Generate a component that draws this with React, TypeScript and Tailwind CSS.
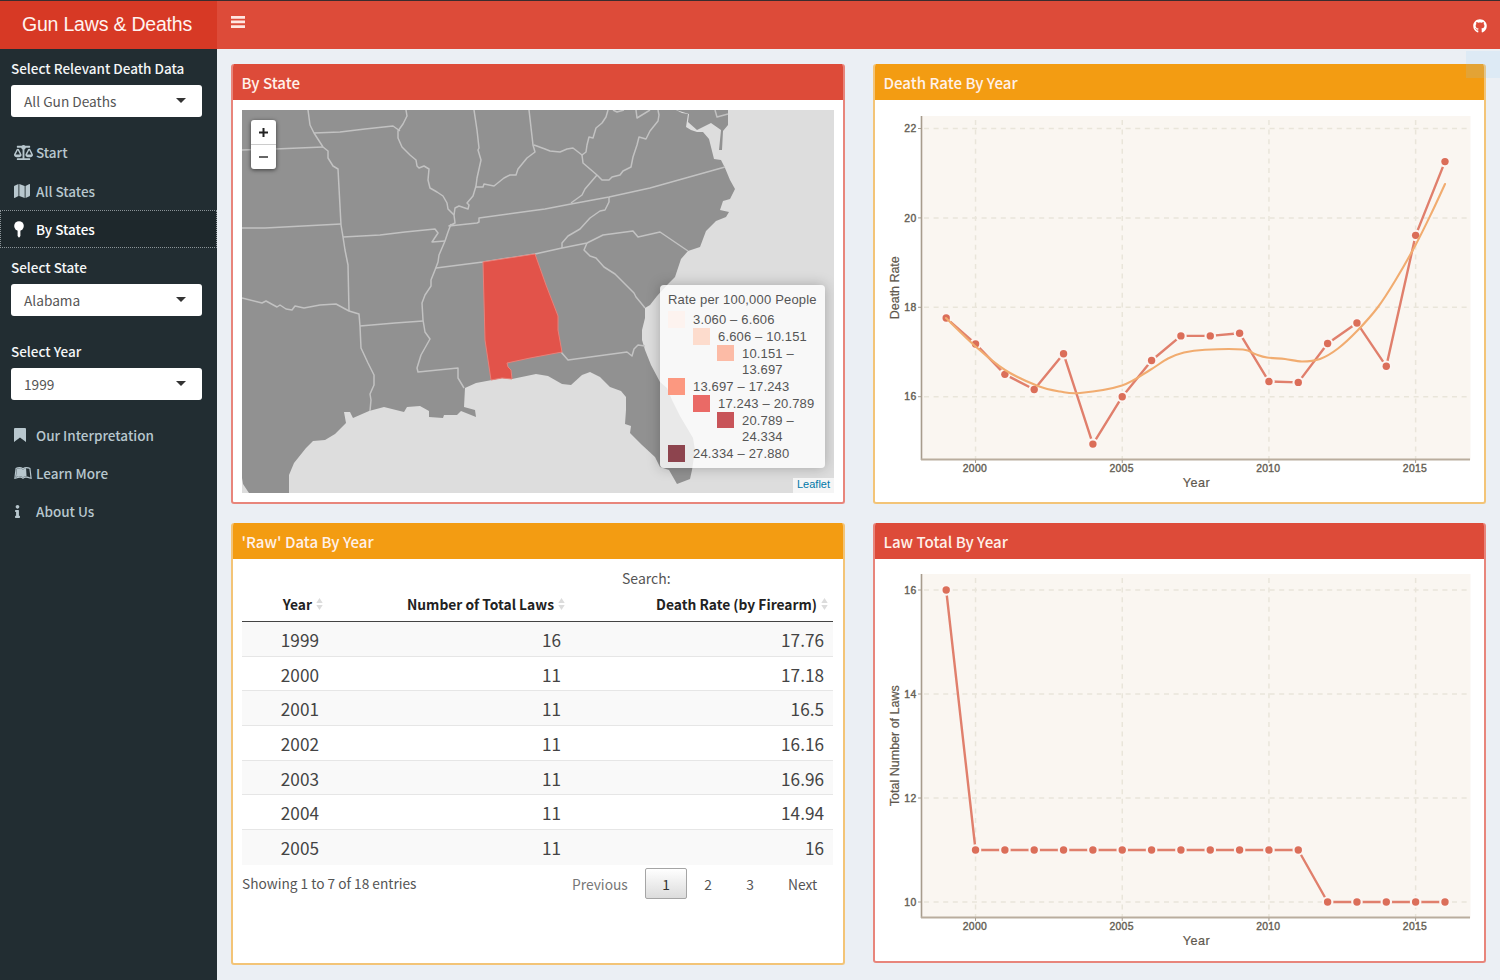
import React from "react";
import { FaBalanceScale, FaMap, FaLeanpub, FaInfo, FaGithub } from "react-icons/fa";

const SANS = "font-['Noto_Sans_CJK_SC',sans-serif]";

function Select({ label, value }: { label: string; value: string }) {
  return (
    <div className="pr-[15px] pl-[11px]">
      <div className="h-[20px] text-[13.5px] leading-[18px] font-medium text-[#f4f6f7] whitespace-nowrap">{label}</div>
      <div className="mt-[6px] flex h-[32px] items-center justify-between rounded-[3px] bg-white pr-[16px] pl-[13px]">
        <span className="text-[13.7px] leading-[20px] text-[#555]">{value}</span>
        <svg width="10" height="5" viewBox="0 0 10 5" className="mb-[2px]">
          <path d="M0 0h10L5 5z" fill="#333" />
        </svg>
      </div>
    </div>
  );
}

function MenuItem({ icon, label, active }: { icon: React.ReactNode; label: string; active?: boolean }) {
  return (
    <div
      className={
        active
          ? "flex h-[38px] items-center border border-dotted border-[#8b9498] bg-[#1e282c] pl-[13px] text-white"
          : "flex h-[38px] items-center pl-[14px] text-[#b8c7ce]"
      }
    >
      <span className="flex w-[22px] shrink-0 items-center">{icon}</span>
      <span className="pb-[1px] text-[13.5px] leading-[20px] font-medium whitespace-nowrap">{label}</span>
    </div>
  );
}

function PinIcon() {
  return (
    <svg width="10" height="17" viewBox="0 0 10 17" fill="currentColor">
      <circle cx="5" cy="5" r="4.8" />
      <path d="M3.6 9h2.8v6L5 16.8L3.6 15z" />
    </svg>
  );
}

function BookmarkIcon() {
  return (
    <svg width="12" height="14" viewBox="0 0 12 14" fill="currentColor">
      <path d="M1 0h10a1 1 0 0 1 1 1v13L6 9.4L0 14V1a1 1 0 0 1 1-1z" />
    </svg>
  );
}

function BarsIcon() {
  return (
    <svg width="14" height="12" viewBox="0 0 14 12" fill="#ffe6e1" className="mb-[6px]">
      <path d="M0 0h14v2.7H0zM0 4.6h14v2.7H0zM0 9.2h14v2.7H0z" />
    </svg>
  );
}

function Box({ title, color, className, children }: { title: string; color: "red" | "orange"; className: string; children: React.ReactNode }) {
  const border = color === "red" ? "border-[#e8857b]" : "border-[#f3c477]";
  const head = color === "red" ? "bg-[#dd4b39]" : "bg-[#f39c12]";
  return (
    <section className={`flex flex-col overflow-hidden rounded-[3px] border-2 border-t-0 bg-white ${border} ${className}`}>
      <h3 className={`-mx-[2px] flex h-[36px] shrink-0 items-center pb-[1px] pl-[10.5px] text-[15.1px] leading-[20px] font-medium text-[#fff1ea] ${head}`}>
        {title}
      </h3>
      {children}
    </section>
  );
}

const LAND =
  "M242 110H676L682 113L688 114L686 127L691 130L697 132L703 132L709 139L714 159L721 160L725 168L730 180L735 189L730 199L723 201L720 210L729 212L726 217L716 221L706 231L700 247L688 251L681 259L675 277L668 284L657 296L650 305L645 308L645 318L642 330L642 340L645 350L651 365L660 382L667 388L672 400L680 416L693 438L695 450L692 470L690 479L677 484L669 470L660 467L655 457L642 445L630 433L631 426L625 424L626 410L626 397L621 391L610 387L600 377L590 372L582 375L571 385L562 384L548 376L536 374L512 379L502 378L492 380L476 383L465 388L464 407L475 410L476 417L461 411L457 415L444 415L443 418L429 417L429 411L420 406L407 407L404 412L384 407L369 411L353 418L350 412L344 412L346 423L335 434L325 440L313 441L306 448L294 463L289 475L289 493H249L243 484L242 478Z";

const DELMARVA = "M676 110H728V125L723 131L722 150H719L721 130L711 123L697 130L688 122L689 114Z";

const BORDERS = [
  "M308 110L310 125L314 133L323 147L328 151L328 158L333 166L338 169L341 225L343 237L345 250L348 265L349 311",
  "M242 150L275 149L323 147",
  "M314 133L340 132L365 129L393 126L400 131",
  "M406 110L407 116L403 124L398 131L398 138L402 147L410 155L416 160L417 166L419 168L424 166L429 169L428 180L430 188L437 192L443 196L447 203L448 209L454 215",
  "M454 215L455 208L459 206L468 209L469 205L467 203L473 196L476 186L477 178L481 160L478 150L479 148L477 130L474 110",
  "M476 187L483 187L484 184L494 186L504 178L510 175L516 175L518 169L527 158L535 152L533 145L529 110",
  "M534 145L545 149L550 151L560 152L567 149L573 148L582 155L586 152L587 145L589 137L593 138L596 128L602 123L606 117L608 110",
  "M582 155L583 163L597 175L602 180L609 180L612 177L620 175L623 171L631 167L633 157L637 145L639 137L646 139L650 131L658 121L659 115L658 110",
  "M636 110L637 118L650 110",
  "M613 110L617 112L624 110",
  "M715 110L717 117L728 114",
  "M597 175L585 189L582 195L571 203",
  "M454 215L455 223L449 226L477 223L479 222L479 218L530 211L545 209L571 204L609 197L650 188L725 167",
  "M343 237L380 235L405 232L435 229L438 233L432 242L445 241",
  "M451 224L448 232L445 241L439 255L438 262L435 270L431 280L431 286L425 295L422 303L423 320L425 332L430 339L421 355L417 368L418 372L458 368L458 378L464 388",
  "M436 268L483 262L535 254L562 248L587 243L603 235L633 231L638 237L660 232L688 251",
  "M562 248L562 243L568 236L580 229L590 218L600 211L605 210L609 202L609 197",
  "M587 243L584 250L590 256L596 258L604 267L615 274L634 293L636 297L641 303L645 308",
  "M561 352L568 360L627 352L632 356L634 349L638 345L645 346",
  "M242 228L265 228L341 224",
  "M242 298L262 303L266 301L277 307L280 305L286 309L292 310L295 306L304 308L320 305L336 304L349 311L359 314L360 326",
  "M360 326L395 323L423 321",
  "M360 326L361 348L368 363L374 375L374 385L370 394L371 400L370 411",
];

const ALABAMA =
  "M483 262L535 254L546 285L558 316L558 330L562 352L530 358L507 363L508 367L511 370L512 379L502 378L491 380L485 340Z";

const LEGEND = [
  { pad: "pl-0", color: "bg-[#fdf3ef]", lines: ["3.060 – 6.606"] },
  { pad: "pl-[25px]", color: "bg-[#fddccd]", lines: ["6.606 – 10.151"] },
  { pad: "pl-[49px]", color: "bg-[#fcbba6]", lines: ["10.151 –", "13.697"] },
  { pad: "pl-0", color: "bg-[#fc9880]", lines: ["13.697 – 17.243"] },
  { pad: "pl-[25px]", color: "bg-[#ea6a66]", lines: ["17.243 – 20.789"] },
  { pad: "pl-[49px]", color: "bg-[#c85459]", lines: ["20.789 –", "24.334"] },
  { pad: "pl-0", color: "bg-[#8d444e]", lines: ["24.334 – 27.880"] },
];

function StateMap() {
  return (
    <div className="relative mx-[9px] mt-[10px] h-[383px] w-[592px] overflow-hidden bg-[#ddd] font-['Liberation_Sans',sans-serif]">
      <svg width="592" height="383" viewBox="242 110 592 383" className="block">
        <path d={LAND} fill="#919191" />
        <path d={DELMARVA} fill="#919191" />
        <g fill="none" stroke="#c2c2c2" strokeWidth="1.5" strokeLinejoin="round">
          {BORDERS.map((d) => (
            <path key={d} d={d} />
          ))}
        </g>
        <path d={ALABAMA} fill="#e2534a" stroke="#e98079" strokeWidth="1" />
      </svg>
      <div className="absolute top-[10px] left-[9px] flex w-[25px] flex-col rounded-[3px] bg-white shadow-[0_1px_4px_rgba(0,0,0,0.6)]">
        <span className="flex h-[25px] items-center justify-center border-b border-[#ccc]">
          <svg width="9" height="9" viewBox="0 0 9 9"><path d="M4.5 0v9M0 4.5h9" stroke="#222" strokeWidth="2" /></svg>
        </span>
        <span className="flex h-[24px] items-center justify-center">
          <svg width="9" height="2" viewBox="0 0 9 2"><path d="M0 1h9" stroke="#333" strokeWidth="1.3" /></svg>
        </span>
      </div>
      <div className="absolute top-[175px] left-[418px] h-[183px] w-[165px] rounded-[4px] bg-white/80 pt-[6px] pl-[8px] shadow-[0_0_13px_rgba(0,0,0,0.25)]">
        <div className="h-[20px] text-[13px] leading-[17px] tracking-[0.18px] whitespace-nowrap text-[#555]">Rate per 100,000 People</div>
        {LEGEND.map((row) => (
          <div key={row.lines[0]} className={`flex ${row.pad}`}>
            <i className={`mr-[8px] block h-[16.75px] w-[17px] ${row.color}`} />
            <div>
              {row.lines.map((l) => (
                <div key={l} className="h-[16.75px] text-[13px] leading-[17px] tracking-[0.16px] whitespace-nowrap text-[#555]">{l}</div>
              ))}
            </div>
          </div>
        ))}
      </div>
      <div className="absolute right-0 bottom-0 h-[15px] w-[41px] bg-white/70 text-center text-[11px] leading-[13px] text-[#0078a8]">Leaflet</div>
    </div>
  );
}

type Pt = [number, number];

function smoothPath(p: Pt[]) {
  let d = `M${p[0][0]} ${p[0][1]}`;
  for (let i = 0; i < p.length - 1; i++) {
    const a = p[Math.max(0, i - 1)], b = p[i], c = p[i + 1], e = p[Math.min(p.length - 1, i + 2)];
    d += `C${b[0] + (c[0] - a[0]) / 6} ${b[1] + (c[1] - a[1]) / 6} ${c[0] - (e[0] - b[0]) / 6} ${c[1] - (e[1] - b[1]) / 6} ${c[0]} ${c[1]}`;
  }
  return d;
}

const TREND: Pt[] = [
  [946, 318], [975, 346], [1005, 370], [1038, 386], [1060, 391.5], [1080, 393], [1122, 385.5], [1150, 370], [1168, 358.5],
  [1184, 352.5], [1205, 349.7], [1243, 349.5], [1255, 354], [1267, 357.5], [1285, 359], [1302, 361.5], [1320, 359], [1338, 348.5],
  [1358, 330], [1378, 307], [1395, 281], [1415, 246], [1432, 212], [1445, 184],
];

const RATES = [17.76, 17.18, 16.5, 16.16, 16.96, 14.94, 16, 16.81, 17.36, 17.36, 17.42, 16.34, 16.32, 17.19, 17.65, 16.68, 19.61, 21.26];
const LAWS = [16, 11, 11, 11, 11, 11, 11, 11, 11, 11, 11, 11, 11, 10, 10, 10, 10, 10];

function Chart({ values, ticks, yRef, unit, yTitle, yTitleLength, trend, viewBox }: {
  values: number[];
  ticks: number[];
  yRef: number;
  unit: number;
  yTitle: string;
  yTitleLength: number;
  trend?: Pt[];
  viewBox: string;
}) {
  const X = (i: number) => 946.2 + i * 29.34;
  const Y = (v: number) => yRef - (v - ticks[0]) * unit;
  const pts: Pt[] = values.map((v, i) => [X(i), Y(v)]);
  const years = [2000, 2005, 2010, 2015];
  return (
    <svg width="609" height="400" viewBox={viewBox} className="block shrink-0 font-['Liberation_Sans',sans-serif]">
      <rect x="921" y="116" width="549.5" height="344" fill="#faf6f1" />
      <g stroke="#e9e5da" strokeWidth="1.5" strokeDasharray="5 4.6" fill="none">
        {ticks.map((t) => <path key={t} d={`M924 ${Y(t)}H1470`} />)}
        {years.map((y) => <path key={y} d={`M${X(y - 1999)} 120V459`} />)}
      </g>
      <path d="M921.5 116V460" stroke="#a79c8d" strokeWidth="1.6" />
      <path d="M921 459.6H1470" stroke="#b9ad9e" strokeWidth="2" />
      <g stroke="#a79c8d" strokeWidth="1">
        {ticks.map((t) => <path key={t} d={`M918 ${Y(t)}H921`} />)}
        {years.map((y) => <path key={y} d={`M${X(y - 1999)} 460V463`} />)}
      </g>
      <g fill="#665f55" fontSize="10.4" stroke="#665f55" strokeWidth="0.4">
        {ticks.map((t) => (
          <text key={t} x="904.3" y={Y(t) + 3.6} textLength="12">{t}</text>
        ))}
        {years.map((y) => (
          <text key={y} x={X(y - 1999) - 12.8} y="471.6" textLength="24">{y}</text>
        ))}
      </g>
      <g fill="#5f584e" stroke="#5f584e" strokeWidth="0.2" fontSize="12.6">
        <text x="1182.8" y="486.5" textLength="27">Year</text>
        <text transform="translate(898.7 287.7) rotate(-90)" textAnchor="middle" textLength={yTitleLength}>{yTitle}</text>
      </g>
      <path d={"M" + pts.map((p) => p.join(" ")).join("L")} fill="none" stroke="#e07f6c" strokeWidth="2.4" strokeLinejoin="round" />
      {pts.map((p) => <circle key={p[0]} cx={p[0]} cy={p[1]} r="5.8" fill="#fcf6f3" />)}
      {pts.map((p) => <circle key={p[0]} cx={p[0]} cy={p[1]} r="3.7" fill="#db6e59" />)}
      {trend && <path d={smoothPath(trend)} fill="none" stroke="#f1ac70" strokeWidth="2.1" strokeLinecap="round" />}
    </svg>
  );
}

const ROWS = [
  ["1999", "16", "17.76"],
  ["2000", "11", "17.18"],
  ["2001", "11", "16.5"],
  ["2002", "11", "16.16"],
  ["2003", "11", "16.96"],
  ["2004", "11", "14.94"],
  ["2005", "11", "16"],
];

function Sort() {
  return (
    <svg width="7" height="12" viewBox="0 0 7 12" className="mb-[1px] shrink-0">
      <path d="M0.3 5L3.5 0L6.7 5zM0.3 7L3.5 12L6.7 7z" fill="#dcdcdc" />
    </svg>
  );
}

function HeadCell({ children, className }: { children: string; className: string }) {
  return (
    <div className={`flex items-center justify-end gap-[4px] text-[13.8px] leading-[20px] font-bold whitespace-nowrap text-[#222] ${className}`}>
      {children}
      <Sort />
    </div>
  );
}

function DataTable() {
  return (
    <div className="mx-[9px] flex w-[591px] flex-col">
      <div className="mt-[9px] h-[21px] pl-[380px] text-[14px] leading-[20px] text-[#555]">Search:</div>
      <div className="flex h-[33px] items-center border-b-[1.5px] border-[#444] pb-[2px]">
        <HeadCell className="w-[81px]">Year</HeadCell>
        <HeadCell className="w-[242px]">Number of Total Laws</HeadCell>
        <HeadCell className="w-[263px]">Death Rate (by Firearm)</HeadCell>
      </div>
      {ROWS.map((r, i) => (
        <div
          key={r[0]}
          className={`flex h-[34.7px] items-center pt-[2px] text-[17.2px] leading-[22px] text-[#444] ${i % 2 === 0 ? "bg-[#f9f9f9]" : "bg-white"} ${i < 6 ? "border-b-[1.5px] border-[#e6e6e6]" : ""}`}
        >
          <div className="w-[77px] text-right">{r[0]}</div>
          <div className="w-[242px] text-right">{r[1]}</div>
          <div className="w-[263px] text-right">{r[2]}</div>
        </div>
      ))}
      <div className="mt-[3px] flex h-[32px] items-center text-[13.8px] leading-[20px] text-[#555]">
        <span className="w-[330px] pb-[1px] text-[13.7px] whitespace-nowrap">Showing 1 to 7 of 18 entries</span>
        <span className="w-[73px] text-[#777]">Previous</span>
        <span className="flex h-[31px] w-[42px] items-center justify-center rounded-[2px] border border-[#a5a5a5] bg-linear-to-b from-white to-[#dcdcdc] text-[#333]">1</span>
        <span className="w-[42px] text-center">2</span>
        <span className="w-[42px] text-center">3</span>
        <span className="ml-[17px]">Next</span>
      </div>
    </div>
  );
}

export default function App() {
  return (
    <div className={`flex h-[980px] w-[1500px] flex-col overflow-hidden bg-[#ebeff4] ${SANS}`}>
      <header className="flex h-[49px] shrink-0 border-t border-[#3a2c2e] text-white">
        <div className="flex w-[217px] items-center justify-center bg-[#d73925] pr-[3px] pb-[2px] font-['Liberation_Sans',sans-serif] text-[19.5px] leading-[24px] tracking-[-0.2px] whitespace-nowrap text-[#fff3f0]">
          Gun Laws &amp; Deaths
        </div>
        <div className="flex flex-1 items-center justify-between bg-[#dd4b39] pr-[13px] pl-[14px]">
          <BarsIcon />
          <FaGithub size={14} className="mt-[1px]" />
        </div>
      </header>
      <div className="flex min-h-0 flex-1">
        <aside className="w-[217px] shrink-0 bg-[#222d32] pt-[10px]">
          <Select label="Select Relevant Death Data" value="All Gun Deaths" />
          <nav className="mt-[16px]">
            <MenuItem icon={<FaBalanceScale size={19} />} label="Start" />
            <div className="h-px" />
            <MenuItem icon={<FaMap preserveAspectRatio="none" className="h-[16px] w-[16px]" />} label="All States" />
            <MenuItem icon={<PinIcon />} label="By States" active />
          </nav>
          <div className="mt-[10px]">
            <Select label="Select State" value="Alabama" />
          </div>
          <div className="mt-[26px]">
            <Select label="Select Year" value="1999" />
          </div>
          <nav className="mt-[16px]">
            <MenuItem icon={<BookmarkIcon />} label="Our Interpretation" />
            <MenuItem icon={<FaLeanpub size={18} />} label="Learn More" />
            <MenuItem icon={<FaInfo size={13} className="-ml-[3px]" />} label="About Us" />
          </nav>
        </aside>
        <main className="relative flex flex-1 gap-[28px] pt-[15px] pl-[14px]">
          <div className="flex w-[614px] flex-col gap-[19px]">
            <Box title="By State" color="red" className="h-[440px]">
              <StateMap />
            </Box>
            <Box title="'Raw' Data By Year" color="orange" className="h-[442px]">
              <DataTable />
            </Box>
          </div>
          <div className="flex w-[613px] flex-col gap-[19px]">
            <Box title="Death Rate By Year" color="orange" className="h-[440px]">
              <Chart values={RATES} ticks={[16, 18, 20, 22]} yRef={396.7} unit={44.7} yTitle="Death Rate" yTitleLength={63} trend={TREND} viewBox="875 100 609 400" />
            </Box>
            <Box title="Law Total By Year" color="red" className="h-[440px]">
              <Chart values={LAWS} ticks={[10, 12, 14, 16]} yRef={444} unit={52} yTitle="Total Number of Laws" yTitleLength={121} viewBox="875 101 609 400" />
            </Box>
          </div>
          <div className="absolute top-[2px] right-0 h-[27px] w-[34px] bg-[#8fcfff]/15" />
        </main>
      </div>
    </div>
  );
}
